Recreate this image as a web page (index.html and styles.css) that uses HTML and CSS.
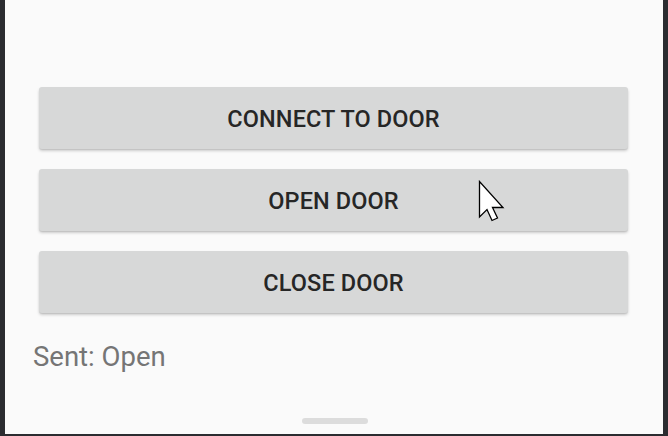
FILE: index.html
```html
<!DOCTYPE html>
<html>
<head>
<meta charset="utf-8">
<link rel="stylesheet" href="styles.css">
</head>
<body>
<div class="screen">
  <div class="buttons">
    <div class="btn">CONNECT TO DOOR</div>
    <div class="btn">OPEN DOOR</div>
    <div class="btn">CLOSE DOOR</div>
  </div>
  <div class="status">Sent: Open</div>
  <div class="spacer"></div>
  <div class="handle"></div>
  <svg class="cursor" width="30" height="42" viewBox="0 0 30 42">
    <path d="M1.5 1.5 L1.5 37 L9 29.5 L14 40.5 L19.5 38 L14.5 27.5 L25 27.5 Z" fill="#fff" stroke="#000" stroke-width="1.3" stroke-linejoin="miter"/>
  </svg>
</div>
</body>
</html>
```

FILE: styles.css
```css
html, body {
  margin: 0;
  padding: 0;
  background: #2b2c30;
  width: 668px;
  height: 436px;
  overflow: hidden;
}
.screen {
  position: relative;
  margin: 0 5px;
  width: 658px;
  height: 434px;
  background: #fafafa;
  display: flex;
  flex-direction: column;
  font-family: Roboto, "Liberation Sans", sans-serif;
}
.buttons {
  display: flex;
  flex-direction: column;
  gap: 20px;
  padding: 87px 35px 0 34px;
}
.btn {
  height: 62px;
  background: #d7d8d8;
  border-radius: 3px;
  box-shadow: 0 2px 3px rgba(0,0,0,0.18), 0 1px 1px rgba(0,0,0,0.08);
  display: flex;
  align-items: center;
  justify-content: center;
  padding-top: 2px;
  box-sizing: border-box;
  font-weight: 500;
  font-size: 23.5px;
  color: #262626;
  letter-spacing: 0.1px;
}
.status {
  margin: 29px 0 0 28px;
  font-size: 27.5px;
  color: #757575;
  line-height: 30px;
}
.spacer { flex: 1; }
.handle {
  align-self: center;
  width: 66px;
  height: 6px;
  border-radius: 3px;
  background: #dcdcdc;
  margin: 0 0 10px 2px;
}
.cursor {
  position: absolute;
  left: 473px;
  top: 180px;
}
```
